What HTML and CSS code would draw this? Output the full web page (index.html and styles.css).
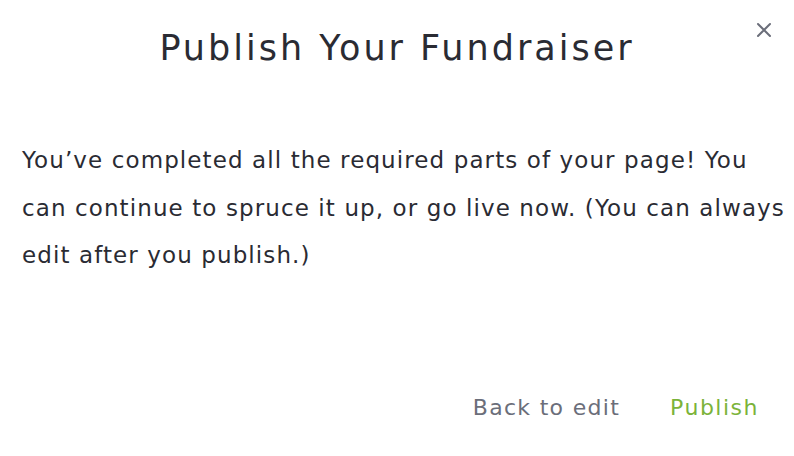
FILE: index.html
```html
<!DOCTYPE html>
<html>
<head>
<meta charset="utf-8">
<link rel="stylesheet" href="styles.css">
</head>
<body>
<div class="modal">
  <button class="close" aria-label="Close">
    <svg width="16" height="16" viewBox="0 0 16 16"><path d="M2 2L14 14M14 2L2 14" stroke="#6b6e7a" stroke-width="2" stroke-linecap="round"/></svg>
  </button>
  <h1 class="title">Publish Your Fundraiser</h1>
  <p class="body">You’ve completed all the required parts of your page! You can continue to spruce it up, or go live now. (You can always edit after you publish.)</p>
  <div class="actions">
    <button class="btn back">Back to edit</button>
    <button class="btn publish">Publish</button>
  </div>
</div>
</body>
</html>
```
FILE: styles.css
```css
html, body { margin: 0; padding: 0; background: #fff; }
body { font-family: "DejaVu Sans", "Noto Sans", sans-serif; color: #2a2b33; }
.modal { position: relative; width: 794px; height: 456px; box-sizing: border-box; padding: 21px 22px 0 22px; display: flex; flex-direction: column; }
.close { position: absolute; top: 22px; right: 22px; border: 0; background: none; padding: 0; width: 16px; height: 16px; cursor: pointer; }
.close svg { display: block; }
.title { margin: 0; text-align: center; font-size: 35px; font-weight: 400; line-height: 54px; letter-spacing: 3px; }
.body { margin: 62px -22px 0 0; font-size: 23px; line-height: 47.5px; letter-spacing: 1.1px; }
.actions { margin-top: auto; margin-bottom: 33px; display: flex; justify-content: flex-end; gap: 50px; padding-right: 13px; }
.btn { border: 0; background: none; padding: 0; font-family: inherit; font-size: 22px; line-height: 30px; cursor: pointer; letter-spacing: 1.3px; }
.back { color: #6b6e7a; }
.publish { color: #7bb33a; letter-spacing: 1.5px; }
```
